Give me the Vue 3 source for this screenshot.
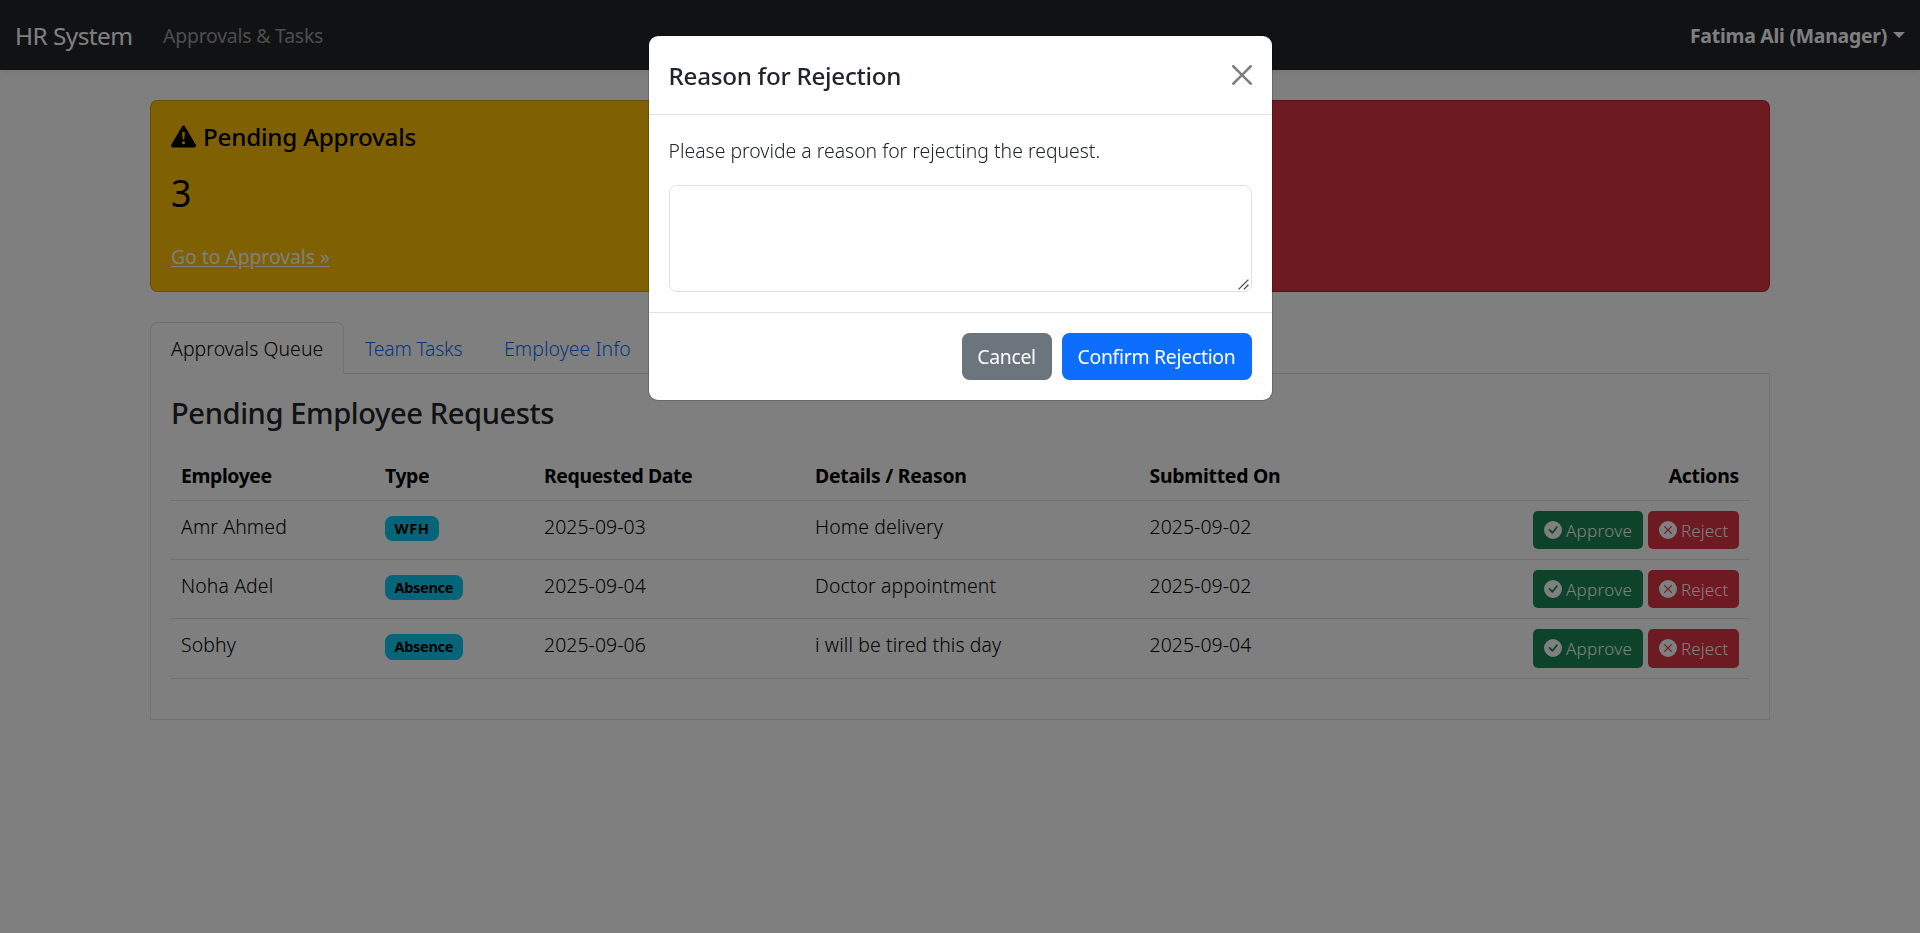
<script setup>
import { ref } from 'vue'

const reason = ref('')
const tabs = ['Approvals Queue', 'Team Tasks', 'Employee Info']
const requests = [
  { name: 'Amr Ahmed', type: 'WFH', date: '2025-09-03', details: 'Home delivery', submitted: '2025-09-02' },
  { name: 'Noha Adel', type: 'Absence', date: '2025-09-04', details: 'Doctor appointment', submitted: '2025-09-02' },
  { name: 'Sobhy', type: 'Absence', date: '2025-09-06', details: 'i will be tired this day', submitted: '2025-09-04' },
]
</script>

<template>
  <div class="page">
    <nav class="navbar">
      <a class="brand"><span>HR System</span></a>
      <a class="nav-link"><span>Approvals &amp; Tasks</span></a>
      <a class="user"><span>Fatima Ali (Manager)</span><i class="caret"></i></a>
    </nav>

    <main class="container">
      <section class="cards">
        <div class="card warning">
          <h5>
            <svg class="warn-icon" viewBox="0 0 16 16" fill="currentColor"><path d="M8.982 1.566a1.13 1.13 0 0 0-1.96 0L.165 13.233c-.457.778.091 1.767.98 1.767h13.713c.889 0 1.438-.99.98-1.767zM8 5c.535 0 .954.462.9.995l-.35 3.507a.552.552 0 0 1-1.1 0L7.1 5.995A.905.905 0 0 1 8 5m.002 6a1 1 0 1 1 0 2 1 1 0 0 1 0-2" /></svg>
            <span>Pending Approvals</span>
          </h5>
          <p class="count"><span>{{ requests.length }}</span></p>
          <a class="go"><span>Go to Approvals »</span></a>
        </div>
        <div class="card danger"></div>
      </section>

      <ul class="tabs">
        <li v-for="(t, i) in tabs" :key="t" class="tab" :class="{ active: i === 0 }"><span>{{ t }}</span></li>
      </ul>

      <section class="panel">
        <h4><span>Pending Employee Requests</span></h4>
        <table>
          <colgroup><col class="c1" /><col class="c2" /><col class="c3" /><col class="c4" /><col class="c5" /><col /></colgroup>
          <thead>
            <tr>
              <th><span>Employee</span></th>
              <th><span>Type</span></th>
              <th><span>Requested Date</span></th>
              <th class="wide"><span>Details / Reason</span></th>
              <th class="wide"><span>Submitted On</span></th>
              <th class="end wide"><span>Actions</span></th>
            </tr>
          </thead>
          <tbody>
            <tr v-for="r in requests" :key="r.name">
              <td><span>{{ r.name }}</span></td>
              <td><b class="badge" :class="r.type.toLowerCase()">{{ r.type }}</b></td>
              <td><span class="date">{{ r.date }}</span></td>
              <td><span class="details">{{ r.details }}</span></td>
              <td><span class="date">{{ r.submitted }}</span></td>
              <td class="end">
                <div class="actions">
                  <button class="btn-sm approve">
                    <svg viewBox="0 0 16 16" fill="currentColor"><path d="M16 8A8 8 0 1 1 0 8a8 8 0 0 1 16 0m-3.97-3.03a.75.75 0 0 0-1.08.022L7.477 9.417 5.384 7.323a.75.75 0 0 0-1.06 1.06L6.97 11.03a.75.75 0 0 0 1.079-.02l3.992-4.99a.75.75 0 0 0-.01-1.05z" /></svg>
                    <span>Approve</span>
                  </button>
                  <button class="btn-sm reject">
                    <svg viewBox="0 0 16 16" fill="currentColor"><path d="M16 8A8 8 0 1 1 0 8a8 8 0 0 1 16 0M5.354 4.646a.5.5 0 1 0-.708.708L7.293 8l-2.647 2.646a.5.5 0 0 0 .708.708L8 8.707l2.646 2.647a.5.5 0 0 0 .708-.708L8.707 8l2.647-2.646a.5.5 0 0 0-.708-.708L8 7.293z" /></svg>
                    <span>Reject</span>
                  </button>
                </div>
              </td>
            </tr>
          </tbody>
        </table>
      </section>
    </main>

    <div class="backdrop">
      <div class="modal">
        <header>
          <h5><span>Reason for Rejection</span></h5>
          <svg class="close" viewBox="0 0 16 16"><path d="M.293.293a1 1 0 0 1 1.414 0L8 6.586 14.293.293a1 1 0 1 1 1.414 1.414L9.414 8l6.293 6.293a1 1 0 0 1-1.414 1.414L8 9.414l-6.293 6.293a1 1 0 0 1-1.414-1.414L6.586 8 .293 1.707a1 1 0 0 1 0-1.414" /></svg>
        </header>
        <div class="body">
          <p><span>Please provide a reason for rejecting the request.</span></p>
          <div class="field">
            <textarea v-model="reason"></textarea>
            <svg class="grip" viewBox="0 0 11 11" fill="none" stroke="#4a4a4a" stroke-width="1.3"><path d="M0.6 10.4 10.4 0.6M5.8 10.4 10.4 5.8" /></svg>
          </div>
        </div>
        <footer>
          <button class="btn cancel">Cancel</button>
          <button class="btn confirm">Confirm Rejection</button>
        </footer>
      </div>
    </div>
  </div>
</template>

<style>
body { background: #fff; overflow: hidden; }
</style>

<style scoped>
* { box-sizing: border-box; margin: 0; padding: 0; }
.page {
  min-height: 933px;
  font-family: "Noto Sans", "Open Sans", sans-serif;
  font-size: 19.4px;
  font-weight: 300;
  line-height: 30px;
  letter-spacing: .12px;
  color: #212529;
}
/* optical baseline adjustment for labels */
span { position: relative; top: 1px; }

.navbar {
  display: flex;
  align-items: center;
  height: 70px;
  padding: 0 15px;
  font-weight: 400;
  background: #212529;
  box-shadow: 0 2.5px 5px rgba(0, 0, 0, .075);
}
.brand { color: #fff; font-size: 24.4px; letter-spacing: -.55px; margin-right: 20px; width: 118px; white-space: nowrap; }
.nav-link { color: rgba(255, 255, 255, .55); padding: 0 10px; letter-spacing: -.2px; }
.user { margin-left: auto; display: flex; align-items: center; color: #fff; font-weight: 700; letter-spacing: -.24px; }
.caret {
  margin: -1px 0 0 6px;
  border-top: 6px solid #fff;
  border-left: 6px solid transparent;
  border-right: 6px solid transparent;
}

.container { width: 1620px; margin: 30px auto 0; }
.cards { display: grid; grid-template-columns: 1fr 1fr; gap: 30px; }
.card { height: 192px; padding: 20px; border: 1px solid rgba(0, 0, 0, .175); border-radius: 7.5px; }
.warning { background: #ffc107; color: #000; }
.danger { background: #dc3545; }
h5 { font-size: 24.2px; font-weight: 500; line-height: 30px; letter-spacing: -.2px; }
.card h5 { display: flex; align-items: center; margin-bottom: 10px; }
.warn-icon { width: 25px; height: 25px; margin-right: 7px; }
.count { height: 60px; font-size: 38.5px; line-height: 60px; margin-bottom: 20px; color: #000; }
.count span { display: inline-block; transform: scaleX(.93); transform-origin: 0 50%; font-weight: 400; }
.go { color: #fff; font-weight: 400; text-decoration: underline; text-underline-offset: 3px; letter-spacing: -.06px; display: block; }

.tabs { display: flex; list-style: none; margin-top: 30px; border-bottom: 1px solid #dee2e6; }
.tab {
  height: 52px;
  margin-bottom: -1px;
  padding: 10px 20px;
  border: 1px solid transparent;
  border-radius: 7.5px 7.5px 0 0;
  color: #0d6efd;
  white-space: nowrap;
}
.tab:nth-child(1) { width: 194px; letter-spacing: .1px; }
.tab:nth-child(2) { width: 139px; letter-spacing: -.2px; }
.tab:nth-child(3) { width: 168px; letter-spacing: .08px; }
.tab.active { color: #000; background: #fff; border-color: #dee2e6 #dee2e6 #fff; }

.panel { height: 346px; padding: 20px; border: 1px solid #dee2e6; border-top: 0; }
h4 { font-size: 29.1px; font-weight: 500; line-height: 36px; letter-spacing: -.4px; margin-bottom: 20px; }
table { width: 1578px; table-layout: fixed; border-collapse: separate; border-spacing: 0; color: #000; }
.c1 { width: 204px; } .c2 { width: 159px; } .c3 { width: 271px; } .c4 { width: 334.5px; } .c5 { width: 240px; }
th, td { padding: 10px; text-align: left; vertical-align: top; border-bottom: 1px solid #dee2e6; }
th { height: 51px; font-weight: 700; letter-spacing: -.38px; }
.wide { letter-spacing: -.25px; }
td { height: 59px; }
tbody tr:last-child td { height: 60px; }
.end { text-align: right; }
.date { letter-spacing: .08px; }
.badge {
  display: block;
  width: max-content;
  height: 25px;
  margin-top: 5px;
  padding: 0 9.5px;
  border-radius: 7.5px;
  background: #0dcaf0;
  font-size: 14.6px;
  font-weight: 700;
  line-height: 25px;
  letter-spacing: -.35px;
}
.wfh { letter-spacing: .6px; }
tbody tr:last-child .badge { height: 26px; }
.actions { display: flex; justify-content: flex-end; gap: 5px; }
.btn-sm {
  display: flex;
  align-items: center;
  height: 38px;
  padding: 0 10px 0 10.5px;
  border: 0;
  border-radius: 5px;
  color: #fff;
  font: 300 17px/26px "Noto Sans", sans-serif;
  letter-spacing: .28px;
}
.btn-sm svg { width: 18px; height: 18px; margin-right: 4.5px; }
tbody tr:last-child .btn-sm { height: 39px; padding-bottom: 2px; }
.approve { width: 110px; background: #198754; }
.reject { width: 91px; background: #dc3545; letter-spacing: .1px; }

.backdrop { position: fixed; inset: 0; padding-top: 35px; background: rgba(0, 0, 0, .5); }
.modal {
  width: 625px;
  margin: 0 auto;
  border: 1px solid rgba(0, 0, 0, .175);
  border-radius: 10px;
  background: #fff;
  background-clip: padding-box;
}
.modal header { display: flex; align-items: center; justify-content: space-between; height: 79px; padding: 0 20px; border-bottom: 1px solid #dee2e6; }
.modal h5 { letter-spacing: -.27px; }
.close { width: 20px; height: 20px; opacity: .5; }
.body { padding: 20px; }
.body p { margin-bottom: 20px; letter-spacing: 0; }
.field { position: relative; height: 107px; }
textarea { display: block; width: 100%; height: 100%; resize: none; border: 1px solid #dee2e6; border-radius: 7.5px; background: #fff; outline: 0; }
.grip { position: absolute; right: 3px; bottom: 2px; width: 11px; height: 11px; }
.modal footer { display: flex; justify-content: flex-end; gap: 10px; height: 88px; padding: 20px; border-top: 1px solid #dee2e6; }
.btn { height: 47px; border: 0; border-radius: 7.5px; color: #fff; font: 400 19.4px/30px "Noto Sans", sans-serif; letter-spacing: -.28px; }
.cancel { width: 90px; background: #6c757d; }
.confirm { width: 190px; background: #0d6efd; }
</style>
